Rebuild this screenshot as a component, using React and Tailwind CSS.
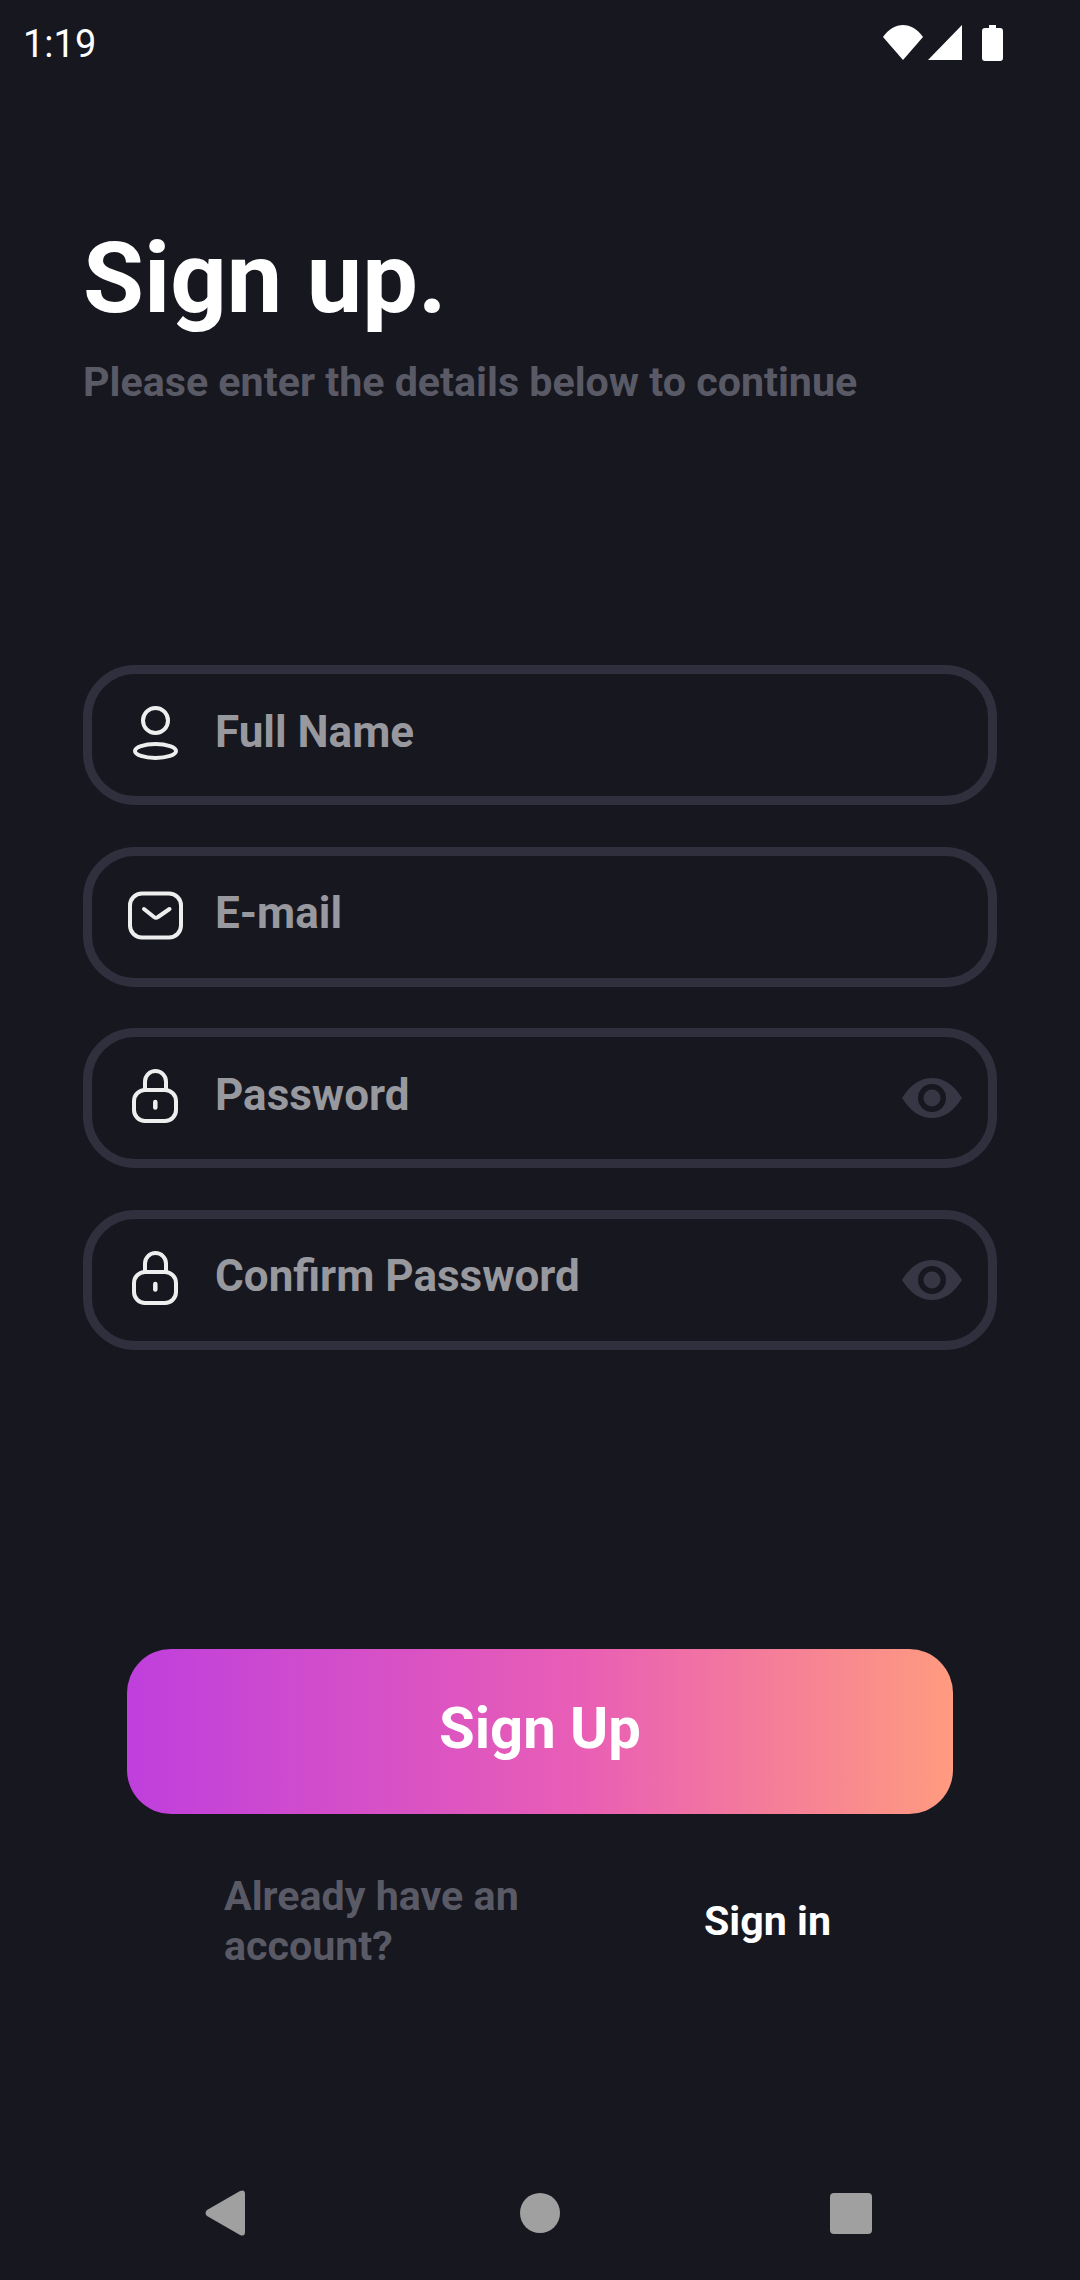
import React from 'react'

const PersonIcon = () => (
  <svg width="56" height="60" viewBox="0 0 56 60" fill="none" stroke="#eeeeee" strokeWidth="4">
    <circle cx="27.5" cy="15.5" r="12.5" />
    <ellipse cx="27.5" cy="46" rx="20.5" ry="7" />
  </svg>
)

const MailIcon = () => (
  <svg width="56" height="60" viewBox="0 0 56 60" fill="none" stroke="#eeeeee" strokeWidth="4" strokeLinecap="round" strokeLinejoin="round">
    <rect x="2" y="6.5" width="51" height="44" rx="12" />
    <path d="M16 22 L26 30 Q28 31.5 30 30 L41.5 22" />
  </svg>
)

const LockIcon = () => (
  <svg width="56" height="60" viewBox="0 0 56 60" fill="none" stroke="#eeeeee" strokeWidth="4" strokeLinecap="round">
    <path d="M17 22 V13.5 A10.5 10.5 0 0 1 38 13.5 V22" />
    <rect x="6" y="22" width="42" height="31" rx="11" />
    <path d="M27.3 34 V39.5" strokeWidth="4.5" />
  </svg>
)

const EyeIcon = () => (
  <svg width="60" height="40" viewBox="0 0 60 40">
    <path d="M0 20 C8 7 18 0 30 0 C42 0 52 7 60 20 C52 33 42 40 30 40 C18 40 8 33 0 20 Z" fill="#363645" />
    <circle cx="30" cy="20" r="14" fill="#16171f" />
    <circle cx="30" cy="20" r="8.5" fill="#363645" />
  </svg>
)

function Field({ icon, label, eye }) {
  return (
    <div className="flex items-center h-[140px] rounded-[52px] border-[9px] border-[#2f2f3d] pl-[36px] pr-[26px]">
      <div className="w-[56px] h-[60px] shrink-0">{icon}</div>
      <span className="ml-[31px] flex-1 text-[44px] leading-[52px] font-bold text-[#98989f] mb-[7px]">{label}</span>
      {eye && <EyeIcon />}
    </div>
  )
}

export default function App() {
  return (
    <div className="w-[1080px] h-[2280px] bg-[#16171f] flex flex-col font-['Roboto',sans-serif] overflow-hidden">
      {/* Status bar */}
      <div className="flex items-center justify-between h-[86px] pl-[23px] pr-[77px]">
        <span className="mt-[2px] text-[38px] leading-[44px] text-white">1:19</span>
        <div className="flex items-center">
          <svg width="40" height="36" viewBox="0 0 40 36" fill="white">
            <path d="M0 12 C11 -4 29 -4 40 12 L20 35 Z" />
          </svg>
          <svg className="ml-[5px]" width="34" height="36" viewBox="0 0 34 36" fill="white">
            <path d="M34 0 V35 H0 Z" />
          </svg>
          <svg className="ml-[20px]" width="21" height="36" viewBox="0 0 21 36" fill="white">
            <path d="M7 0 H14 V3 H18 Q21 3 21 6 V33 Q21 36 18 36 H3 Q0 36 0 33 V6 Q0 3 3 3 H7 Z" />
          </svg>
        </div>
      </div>

      {/* Header */}
      <div className="pl-[83px] pt-[134px]">
        <h1 className="text-[99px] leading-[116px] font-bold text-white">Sign up.</h1>
        <p className="mt-[22px] text-[41.2px] leading-[48px] font-bold text-[#5a5a66]">Please enter the details below to continue</p>
      </div>

      {/* Fields */}
      <div className="mt-[259px] mx-[83px] flex flex-col gap-[41.5px]">
        <Field icon={<PersonIcon />} label="Full Name" />
        <Field icon={<MailIcon />} label="E-mail" />
        <Field icon={<LockIcon />} label="Password" eye />
        <Field icon={<LockIcon />} label="Confirm Password" eye />
      </div>

      {/* Submit */}
      <button className="mt-[299px] mx-[127px] h-[165px] pb-[5px] rounded-[44px] bg-[linear-gradient(90deg,#bf3fdd_0%,#e95eb5_55%,#ff9b7f_100%)] text-[58px] font-bold text-white">
        Sign Up
      </button>

      <div className="mt-[57px] flex items-center pl-[224px]">
        <p className="w-[480px] text-[41.2px] leading-[50px] font-bold text-[#5a5a66]">Already have an<br />account?</p>
        <span className="text-[41.2px] leading-[50px] font-bold text-white">Sign in</span>
      </div>

      {/* Nav bar */}
      <div className="mt-auto mb-[44px] flex items-center pl-[205px]">
        <svg width="40" height="46" viewBox="0 0 40 46" fill="#a0a0a0">
          <path d="M35 1 Q40 -1 40 4 V42 Q40 47 35 45 L2 26 Q-1 23 2 20 Z" />
        </svg>
        <div className="ml-[275px] w-[40px] h-[40px] rounded-full bg-[#a0a0a0]" />
        <div className="ml-[270px] w-[42px] h-[41px] rounded-[4px] bg-[#a0a0a0]" />
      </div>
    </div>
  )
}
